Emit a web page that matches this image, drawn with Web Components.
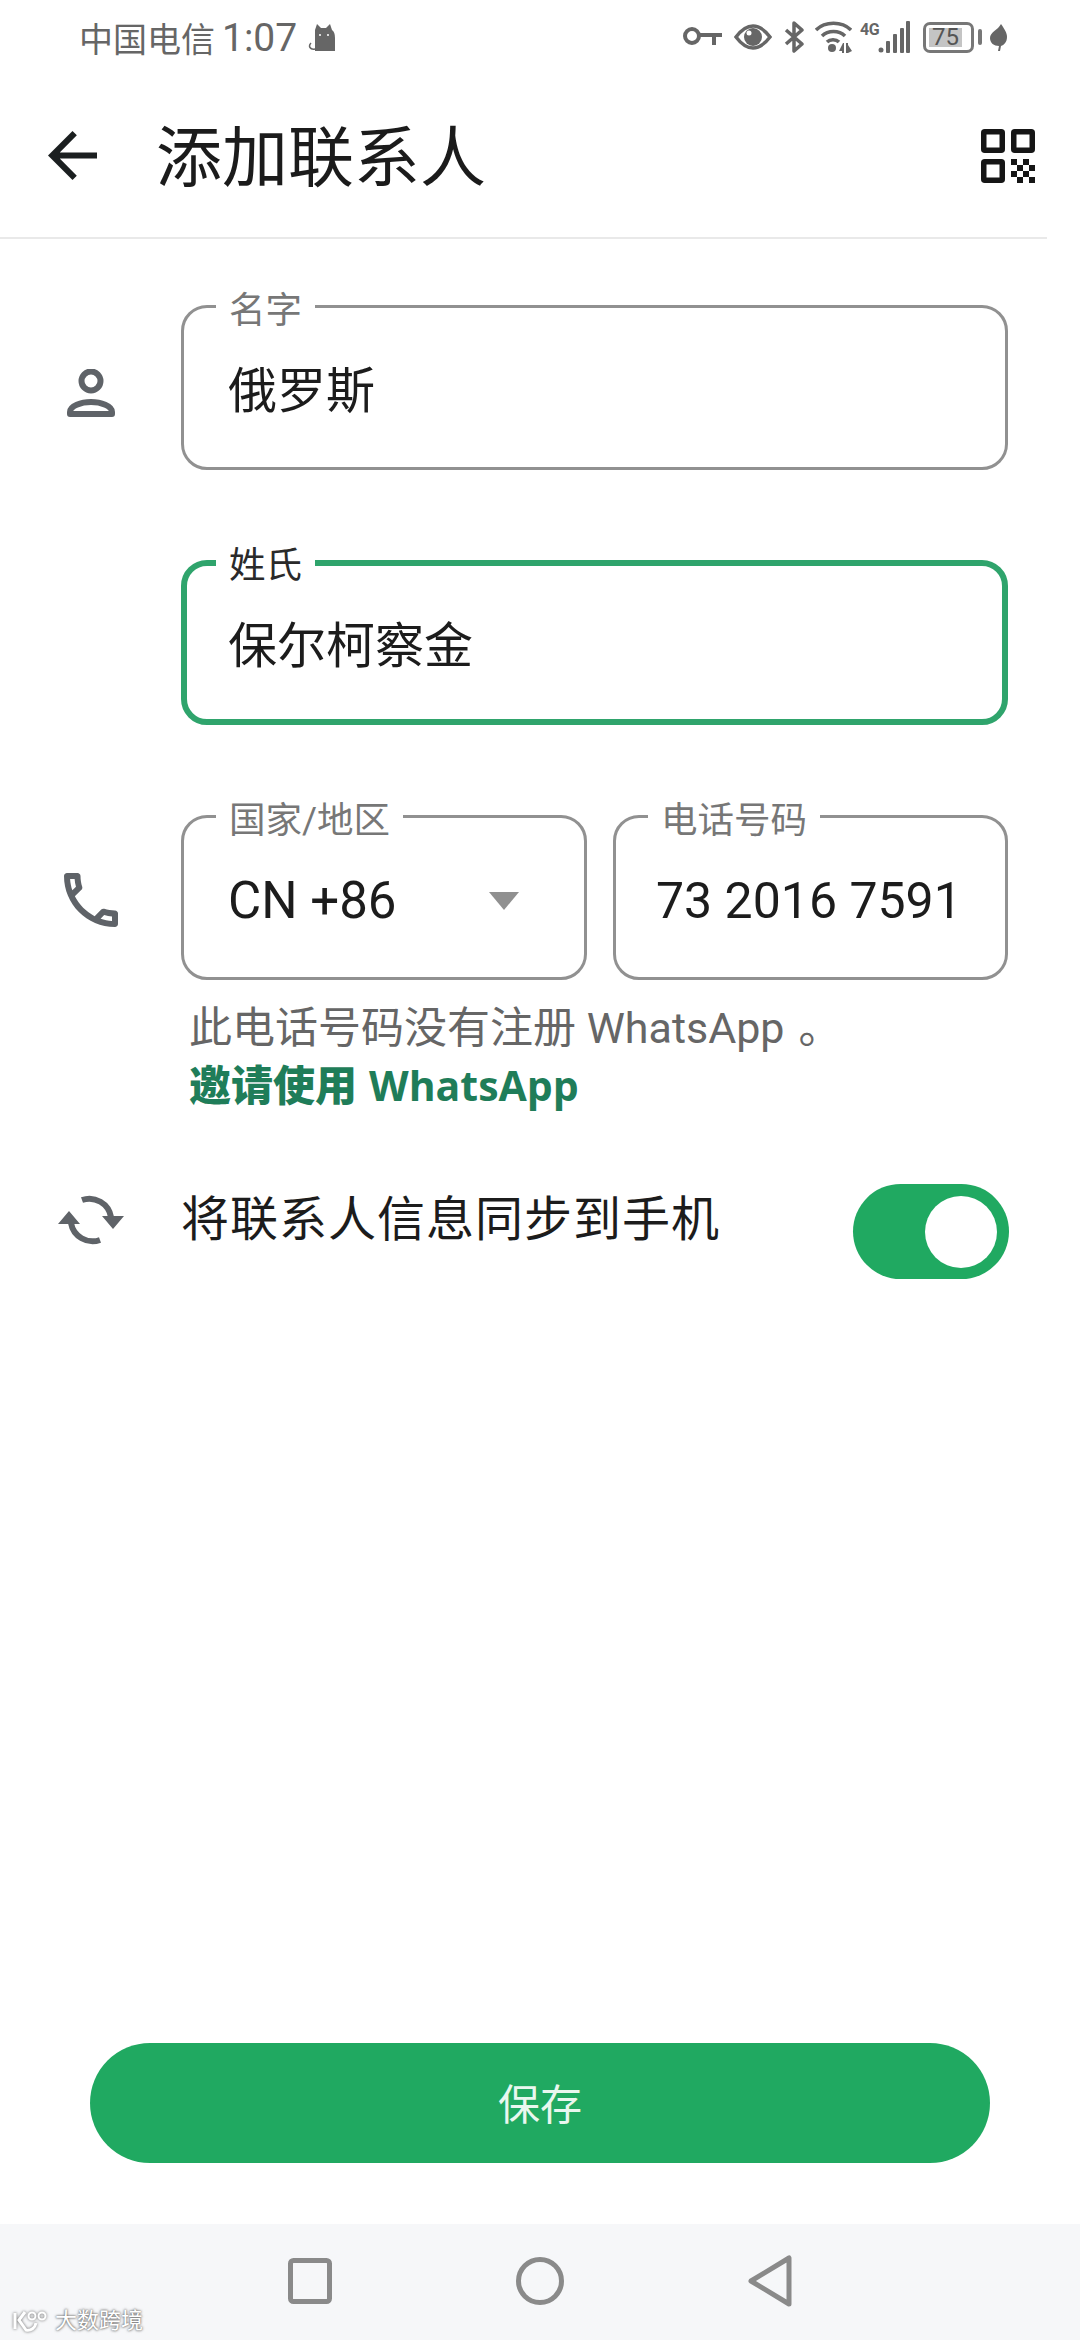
<!DOCTYPE html>
<html lang="zh-CN">
<head>
<meta charset="utf-8">
<title>添加联系人</title>
<style>
  html, body { margin: 0; background: #fff; }
  body { font-family: Roboto, "Noto Sans CJK SC", sans-serif; }
</style>
</head>
<body>
<contact-page>
  <status-bar carrier="中国电信" time="1:07"></status-bar>
  <app-header title="添加联系人"></app-header>
  <contact-form>
    <form-row>
      <svg slot="icon" style="margin-top:10px" width="48" height="48" viewBox="0 0 48 48" fill="none" stroke="#5f6368" stroke-width="6">
        <circle cx="24" cy="12" r="9.5"/>
        <path d="M3 45v-2c0-6 11-10 21-10s21 4 21 10v2z" stroke-linejoin="round"/>
      </svg>
      <outlined-field label="名字" style="--pt:0px;--pb:3px;--size:49px">俄罗斯</outlined-field>
    </form-row>
    <form-row>
      <outlined-field label="姓氏" focused style="--pt:0px;--pb:3px;--size:49px">保尔柯察金</outlined-field>
    </form-row>
    <form-row>
      <svg slot="icon" style="margin-top:4px" width="54" height="54" viewBox="3 3 18 18" fill="#5f6368">
        <path d="M6.54 5c.06.89.21 1.76.45 2.59l-1.2 1.2c-.41-1.2-.67-2.47-.76-3.79h1.51m9.86 12.02c.85.24 1.72.39 2.6.45v1.49c-1.32-.09-2.59-.35-3.8-.75l1.2-1.19M7.5 3H4c-.55 0-1 .45-1 1 0 9.39 7.61 17 17 17 .55 0 1-.45 1-1v-3.49c0-.55-.45-1-1-1-1.24 0-2.45-.2-3.57-.57-.1-.04-.21-.05-.31-.05-.26 0-.51.1-.71.29l-2.2 2.2c-2.83-1.45-5.15-3.76-6.59-6.59l2.2-2.2c.28-.28.36-.67.25-1.02C8.7 6.45 8.5 5.25 8.5 4c0-.55-.45-1-1-1z"/>
      </svg>
      <div style="display:flex;gap:26px">
        <outlined-field label="国家/地区" style="flex:0 0 406px;--size:51px" dropdown>CN +86</outlined-field>
        <outlined-field label="电话号码" style="flex:1;--pad:40px;--size:50px">73 2016 7591</outlined-field>
      </div>
    </form-row>
    <help-note link="邀请使用" app="WhatsApp">此电话号码没有注册 WhatsApp<span style="margin-left:14px">。</span></help-note>
    <sync-row>将联系人信息同步到手机</sync-row>
  </contact-form>
  <save-button>保存</save-button>
  <nav-bar></nav-bar>
</contact-page>

<script>
class ContactPage extends HTMLElement {
  constructor () {
    super()
    this.attachShadow({ mode: 'open' }).innerHTML = `
      <style>
        :host { display: flex; flex-direction: column; height: 2340px; overflow: hidden; background: #fff; }
      </style>
      <slot></slot>`
  }
}

class StatusBar extends HTMLElement {
  constructor () {
    super()
    this.attachShadow({ mode: 'open' }).innerHTML = `
      <style>
        :host { display: flex; align-items: center; height: 74px; padding: 0 73px 0 79px; color: #666; box-sizing: border-box; }
        .carrier { font-size: 34px; white-space: nowrap; }
        .time { font-size: 39px; margin-left: 7px; padding-top: 2px; white-space: nowrap; }
        .cat { margin-left: 11px; }
        .icons { margin-left: auto; display: flex; align-items: center; }
        svg { display: block; flex: none; }
        .net { position: relative; width: 50px; height: 32px; margin-left: 8px; }
        .net b { position: absolute; left: 0; top: 1px; font-size: 16px; line-height: 15px; letter-spacing: -.5px; font-weight: 700; }
        .net svg { position: absolute; left: 0; top: 0; }
        .batt { position: relative; width: 59px; height: 31px; margin-left: 13px; }
        .batt i { position: absolute; left: 6px; top: 6px; width: 33px; height: 19px; background: #c4c4c4; }
        .batt u { position: absolute; left: 0; top: 0; width: 51px; height: 31px; box-sizing: border-box; border: 3px solid #777; border-radius: 7px; }
        .batt em { position: absolute; left: 55px; top: 7px; width: 4px; height: 16px; border-radius: 2px; background: #777; }
        .batt span { position: absolute; left: 0; top: 0; width: 45px; text-align: center; font-size: 24px; line-height: 31px; color: #555; }
      </style>
      <span class="carrier"></span><span class="time"></span>
      <svg class="cat" width="28" height="27" viewBox="0 0 28 27" fill="#666">
        <path d="M7 27V6L9 0l4 4h5l4-4 2 6q3 2 3 8v13z"/>
        <circle cx="12" cy="11" r="1" fill="#fff"/><circle cx="20" cy="11" r="1" fill="#fff"/>
        <path d="M7 25c-5 1-7-3-4-6" fill="none" stroke="#666" stroke-width="1.5"/>
      </svg>
      <div class="icons">
        <svg width="39" height="20" viewBox="0 0 39 20" fill="none" stroke="#666" stroke-width="4">
          <circle cx="9" cy="9" r="7"/>
          <path d="M16 8h23M31 8v10" />
        </svg>
        <svg style="margin-left:12px" width="38" height="26" viewBox="0 0 38 26">
          <path d="M2 13C8 5 13 2 19 2s11 3 17 11c-6 8-11 11-17 11S8 21 2 13z" fill="none" stroke="#666" stroke-width="3.5"/>
          <circle cx="19" cy="13" r="9" fill="#666"/><circle cx="15" cy="9" r="2.5" fill="#fff"/>
        </svg>
        <svg style="margin-left:12px" width="21" height="32" viewBox="0 0 21 32" fill="none" stroke="#666" stroke-width="3.5" stroke-linejoin="round">
          <path d="M2 9l16 14-8 7V2l8 7L2 23"/>
        </svg>
        <svg style="margin-left:10px" width="37" height="32" viewBox="0 0 37 32" fill="none" stroke="#666" stroke-width="3.5">
          <path d="M1 9C10 0 27 0 36 9M7 15c6-6 17-6 23 0M12 21c3-3 9-3 12 0"/>
          <circle cx="17" cy="27" r="4" fill="#666" stroke="none"/>
          <path d="M28 22l-4 8h3v2h2v-10zM31 22h2v2l4 6-4 2h-2z" fill="#666" stroke="none"/>
        </svg>
        <div class="net">
          <b>4G</b>
          <svg width="50" height="32" viewBox="0 0 50 32" fill="#666">
            <circle cx="21" cy="29" r="2.5"/>
            <rect x="26" y="20" width="4" height="12" rx="1"/>
            <rect x="33" y="13" width="4" height="19" rx="1"/>
            <rect x="40" y="7" width="4" height="25" rx="1"/>
            <rect x="46" y="0" width="4" height="32" rx="1"/>
          </svg>
        </div>
        <div class="batt"><i></i><u></u><em></em><span>75</span></div>
        <svg style="margin-left:8px" width="17" height="27" viewBox="0 0 17 27" fill="#666">
          <path d="M11 0c4 6 6 9 6 13 0 5-3 8-6 9l-1 5H8l1-5C4 22 0 19 0 14 0 8 8 6 11 0z"/>
        </svg>
      </div>`
    this.shadowRoot.querySelector('.carrier').textContent = this.getAttribute('carrier')
    this.shadowRoot.querySelector('.time').textContent = this.getAttribute('time')
  }
}

class AppHeader extends HTMLElement {
  constructor () {
    super()
    this.attachShadow({ mode: 'open' }).innerHTML = `
      <style>
        :host { display: block; position: relative; box-sizing: border-box; height: 165px; }
        .bar { display: flex; align-items: center; height: 163px; padding: 0 45px 0 48px; }
        h1 { margin: 0 0 0 59px; font-size: 66px; font-weight: 400; color: #1b1b1b; line-height: 1; padding-top: 6px; }
        .qr { margin-left: auto; }
        svg { display: block; }
        .line { height: 2px; width: 1047px; background: #e9e9e9; }
      </style>
      <div class="bar">
        <svg width="49" height="49" viewBox="4 4 16 16" fill="#1b1f20"><path d="M20 11H7.83l5.59-5.59L12 4l-8 8 8 8 1.41-1.41L7.83 13H20v-2z"/></svg>
        <h1></h1>
        <svg class="qr" width="54" height="54" viewBox="0 0 54 54" fill="#161616">
          <g fill="none" stroke="#161616" stroke-width="5.5">
            <rect x="2.75" y="2.75" width="18.5" height="18.5" rx="1"/>
            <rect x="32.75" y="2.75" width="18.5" height="18.5" rx="1"/>
            <rect x="2.75" y="32.75" width="18.5" height="18.5" rx="1"/>
          </g>
          <path d="M30 30h6v6h-6zM42 30h6v6h-6zM36 36h6v6h-6zM48 36h6v6h-6zM30 42h6v6h-6zM42 42h6v6h-6zM36 48h6v6h-6zM48 48h6v6h-6z"/>
        </svg>
      </div>
      <div class="line"></div>`
    this.shadowRoot.querySelector('h1').textContent = this.getAttribute('title')
  }
}

class ContactForm extends HTMLElement {
  constructor () {
    super()
    this.attachShadow({ mode: 'open' }).innerHTML = `
      <style>
        :host { display: flex; flex-direction: column; flex: 1; padding-top: 66px; }
        ::slotted(form-row) { margin-bottom: 90px; }
        ::slotted(form-row:nth-of-type(3)) { margin-bottom: 0; }
      </style>
      <slot></slot>`
  }
}

class FormRow extends HTMLElement {
  constructor () {
    super()
    this.attachShadow({ mode: 'open' }).innerHTML = `
      <style>
        :host { display: grid; grid-template-columns: 181px 1fr; padding-right: 72px; align-items: center; }
        .icon { display: flex; justify-content: center; }
      </style>
      <div class="icon"><slot name="icon"></slot></div>
      <div><slot></slot></div>`
  }
}

class OutlinedField extends HTMLElement {
  constructor () {
    super()
    this.attachShadow({ mode: 'open' }).innerHTML = `
      <style>
        :host { display: block; }
        .box { position: relative; box-sizing: border-box; height: 165px; display: flex; align-items: center;
               border: 3px solid #919191; border-radius: 26px;
               padding: var(--pt, 6px) 34px var(--pb, 0px) var(--pad, 44px);
               font-size: var(--size, 48px); color: #1c1c1c; white-space: nowrap; }
        :host([focused]) .box { border: 6px solid #2fa46c; padding-left: 41px; }
        .label { position: absolute; left: 32px; top: -20px; padding: 0 13px; background: #fff;
                 font-size: 36.5px; line-height: 46px; color: #777; }
        :host([focused]) .label { left: 29px; top: -23px; color: #2a2a2a; }
        .arrow { display: none; margin-left: auto; width: 0; height: 0; margin-right: 31px;
                 border: 15px solid transparent; border-top: 18px solid #909090; border-bottom: 0; }
        :host([dropdown]) .arrow { display: block; }
      </style>
      <div class="box">
        <span class="label"></span>
        <span><slot></slot></span>
        <span class="arrow"></span>
      </div>`
    this.shadowRoot.querySelector('.label').textContent = this.getAttribute('label')
  }
}

class HelpNote extends HTMLElement {
  constructor () {
    super()
    this.attachShadow({ mode: 'open' }).innerHTML = `
      <style>
        :host { display: block; padding: 20px 0 0 189px; font-size: 43px; line-height: 57px; color: #666; white-space: nowrap; }
        a { display: block; font-size: 42px; color: #1f7d59; font-weight: 700; text-decoration: none; }
        a span { font-family: "Open Sans", "Noto Sans CJK SC", sans-serif; font-size: 41px; margin-left: 12px; }
      </style>
      <div><slot></slot></div>
      <a><b></b><span></span></a>`
    this.shadowRoot.querySelector('b').textContent = this.getAttribute('link')
    this.shadowRoot.querySelector('a span').textContent = this.getAttribute('app')
  }
}

class SyncRow extends HTMLElement {
  constructor () {
    super()
    this.attachShadow({ mode: 'open' }).innerHTML = `
      <style>
        :host { display: grid; grid-template-columns: 181px 1fr auto; margin-top: 69px; padding-right: 71px; }
        .icon { display: flex; justify-content: center; padding-top: 11px; }
        .text { font-size: 48px; line-height: 72px; color: #1c1c1c; letter-spacing: 1px; white-space: nowrap; }
        .toggle { box-sizing: border-box; width: 156px; height: 95px; border-radius: 48px; background: #20a961;
                  display: flex; align-items: center; justify-content: flex-end; padding-right: 12px; }
        .toggle i { width: 72px; height: 72px; border-radius: 50%; background: #fff; }
      </style>
      <div class="icon">
        <svg width="66" height="50" viewBox="0 0 66 50" fill="none" stroke="#5f6368" stroke-width="6">
          <path d="M24 5A22 22 0 0 1 53 22M42 45A22 22 0 0 1 13 28"/>
          <path d="M44 21h22L55 34zM0 29h22L11 16z" fill="#5f6368" stroke="none"/>
        </svg>
      </div>
      <div class="text"><slot></slot></div>
      <div class="toggle"><i></i></div>`
  }
}

class SaveButton extends HTMLElement {
  constructor () {
    super()
    this.attachShadow({ mode: 'open' }).innerHTML = `
      <style>
        :host { display: flex; align-items: center; justify-content: center; box-sizing: border-box; height: 120px; margin: 0 90px 61px;
                padding-bottom: 4px; border-radius: 60px; background: #20a961; color: #e9f7ef; font-size: 42px; }
      </style>
      <slot></slot>`
  }
}

class NavBar extends HTMLElement {
  constructor () {
    super()
    this.attachShadow({ mode: 'open' }).innerHTML = `
      <style>
        :host { display: flex; position: relative; box-sizing: border-box; height: 116px; background: #f6f7f9;
                align-items: center; justify-content: center; gap: 184px; padding-bottom: 2px; }
        svg { display: block; }
        .mark { position: absolute; left: 12px; top: 85px; display: flex; align-items: center; gap: 5px;
                font-size: 22px; line-height: 24px; color: #fff; text-shadow: 0 0 3px #666, 0 0 2px #777; }
      </style>
      <svg width="44" height="46" viewBox="0 0 44 46" fill="none" stroke="#8a8a8a" stroke-width="5">
        <rect x="2.5" y="2.5" width="39" height="41" rx="3"/>
      </svg>
      <svg width="48" height="48" viewBox="0 0 48 48" fill="none" stroke="#8a8a8a" stroke-width="5">
        <circle cx="24" cy="24" r="21.5"/>
      </svg>
      <svg width="44" height="52" viewBox="0 0 44 52" fill="none" stroke="#8a8a8a" stroke-width="5" stroke-linejoin="round">
        <path d="M41 3v46L3 26z"/>
      </svg>
      <div class="mark">
        <svg width="38" height="22" viewBox="0 0 38 22" fill="none" stroke="#fff" stroke-width="3" style="filter:drop-shadow(0 0 1.5px #666)">
          <path d="M3 3v16M13 2L7 10l7 10c5 1 9-2 10-7"/>
          <circle cx="20" cy="6" r="3.5" stroke-width="2"/><circle cx="30" cy="6" r="3.5" stroke-width="2"/>
        </svg>
        <span>大数跨境</span>
      </div>`
  }
}

customElements.define('contact-page', ContactPage)
customElements.define('status-bar', StatusBar)
customElements.define('app-header', AppHeader)
customElements.define('contact-form', ContactForm)
customElements.define('form-row', FormRow)
customElements.define('outlined-field', OutlinedField)
customElements.define('help-note', HelpNote)
customElements.define('sync-row', SyncRow)
customElements.define('save-button', SaveButton)
customElements.define('nav-bar', NavBar)
</script>
</body>
</html>
